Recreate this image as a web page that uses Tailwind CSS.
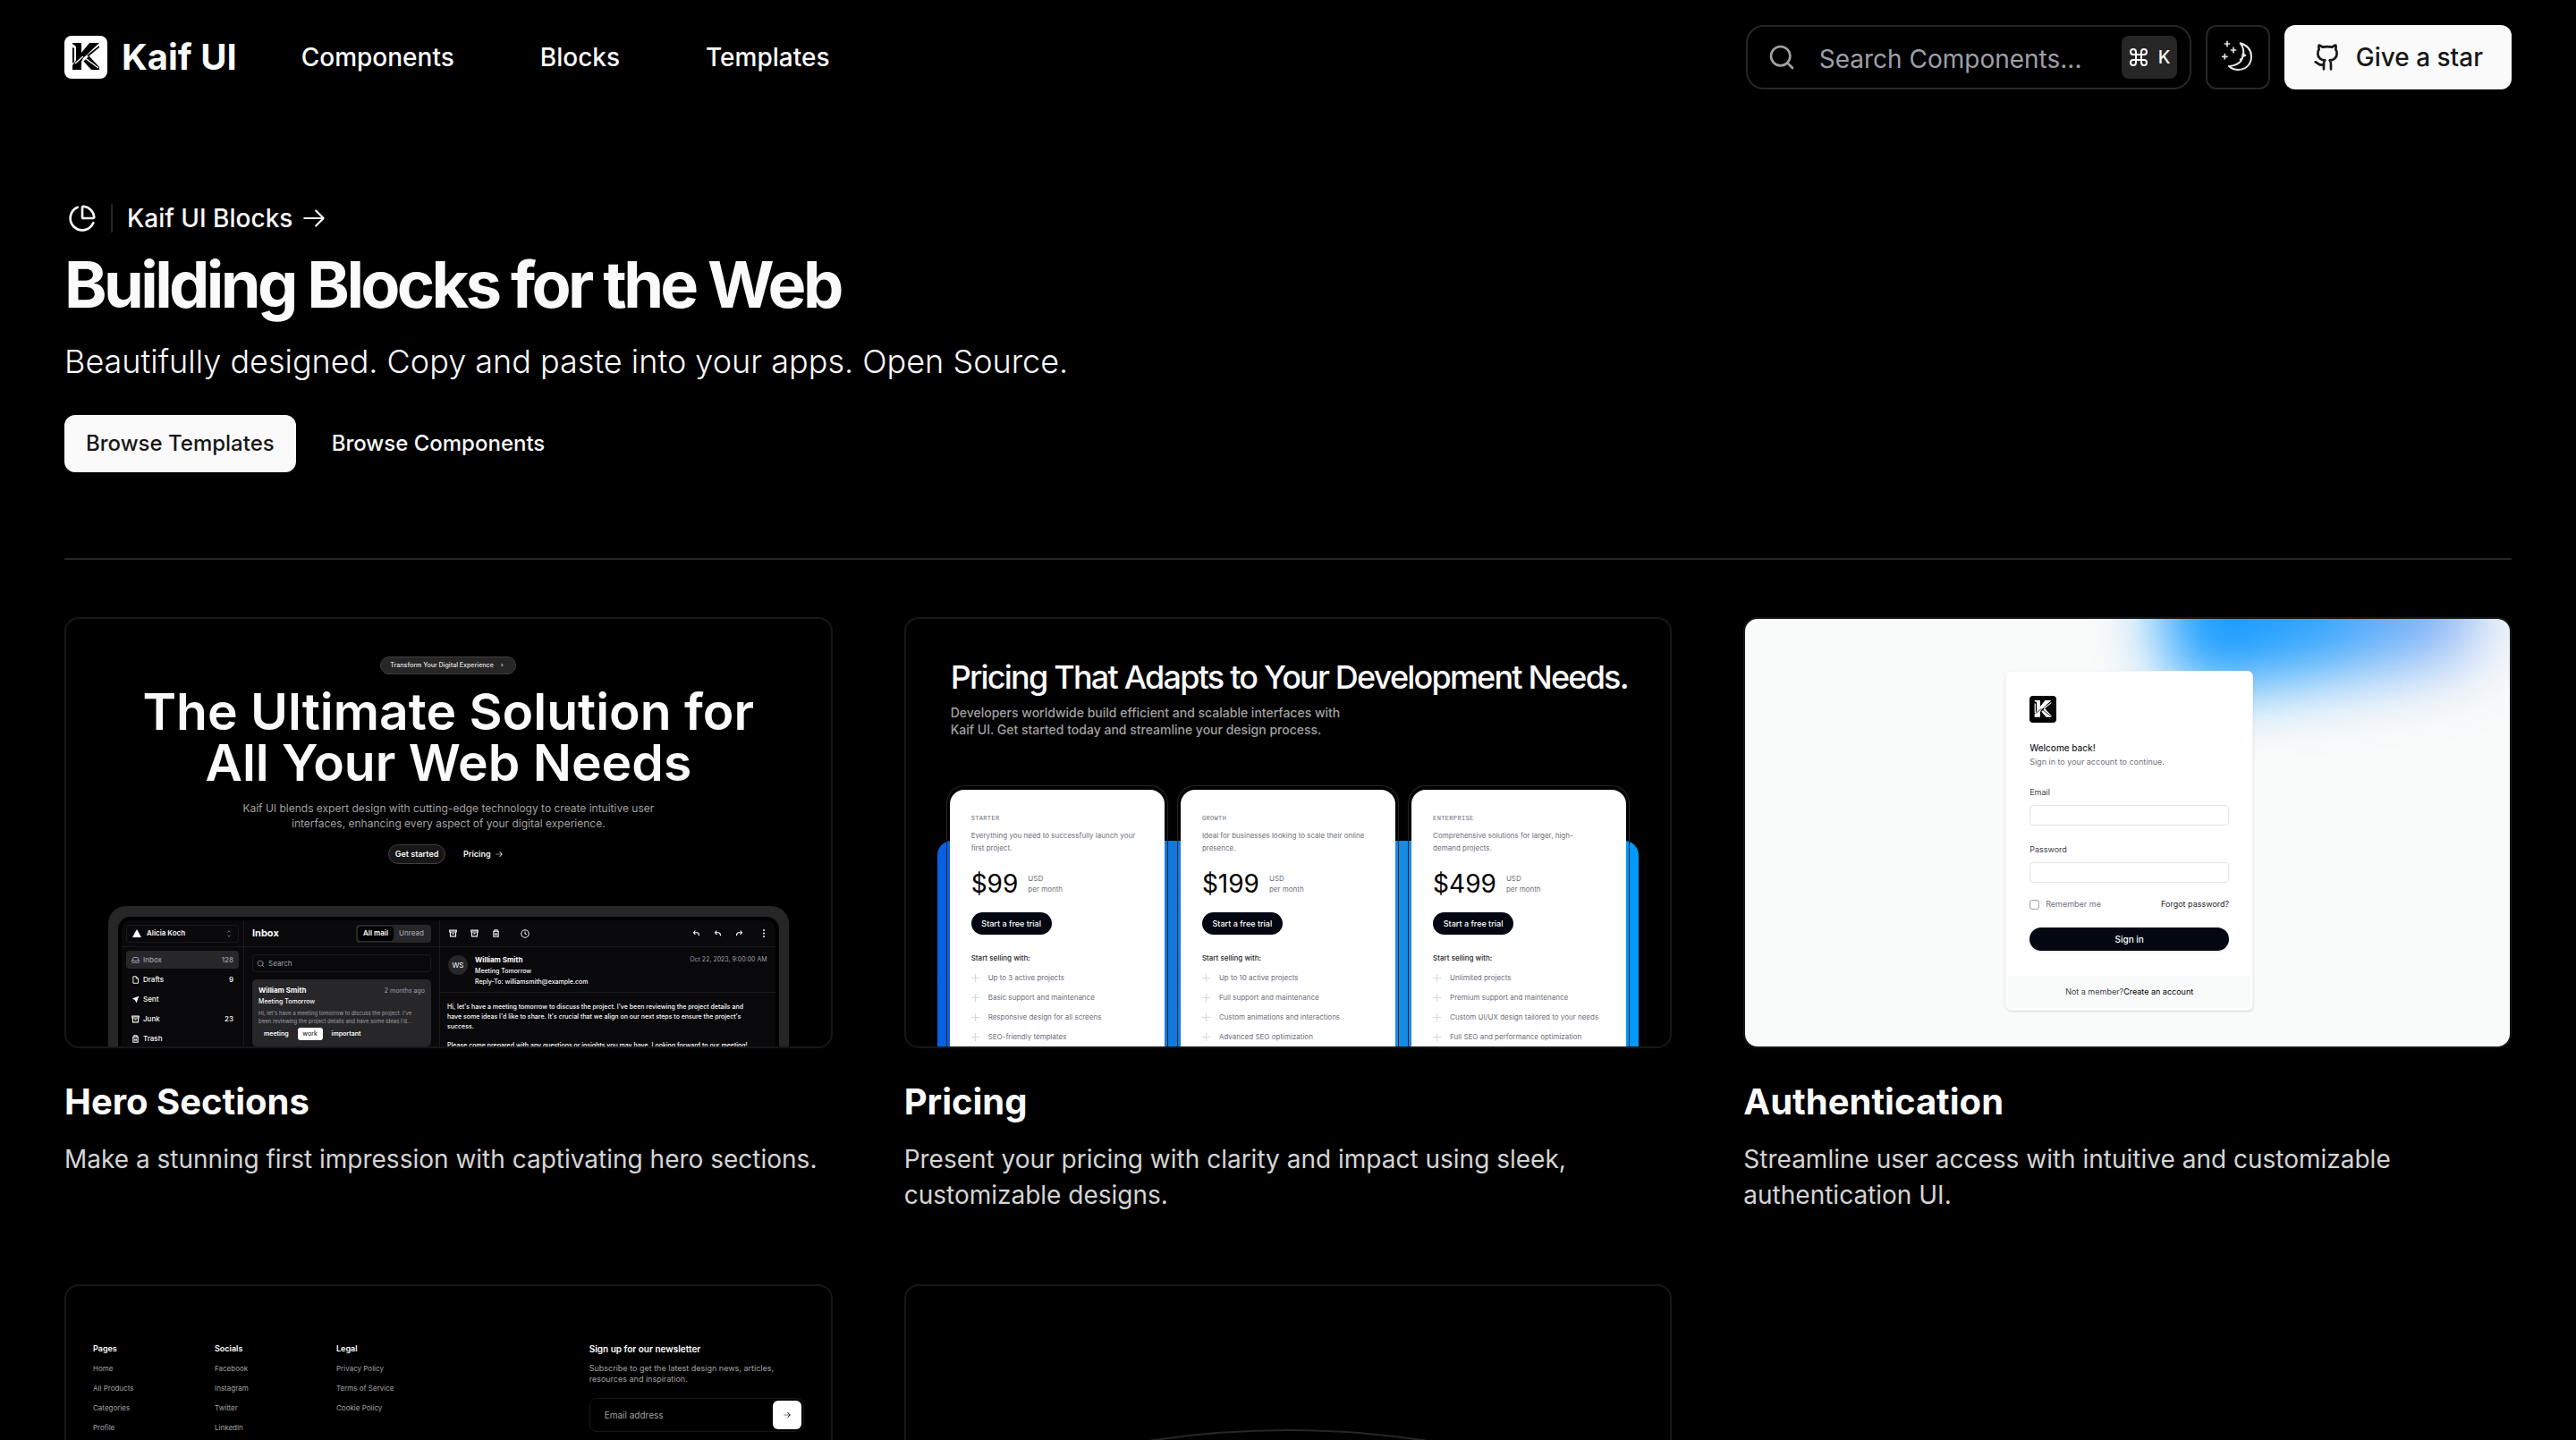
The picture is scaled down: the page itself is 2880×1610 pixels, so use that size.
<!DOCTYPE html>
<html lang="en">
<head>
<meta charset="utf-8">
<meta name="viewport" content="width=device-width, initial-scale=1">
<title>Kaif UI Blocks</title>
<script src="https://cdn.jsdelivr.net/npm/@tailwindcss/browser@4"></script>
</head>
<body class="h-screen overflow-x-hidden overflow-y-auto bg-black font-['Inter',sans-serif] text-neutral-50 [scrollbar-width:none]">

<svg class="hidden" aria-hidden="true">
  <symbol id="logo" viewBox="0 0 48 48">
    <path d="M9 8h10v12l-6 8V12l-4-3z"/>
    <path d="M9 13l2 1v15l-2 2z"/>
    <path d="M28 8h11l-18 17-2 4v9H9v-5l10-14z"/>
    <path d="M27 22l12 13v3h-9l-9-10z"/>
    <path d="M21 28L39 10.500M12 31l9-8M22 24l16 12" fill="none" stroke="var(--line)" stroke-width="1.300"/>
    <path d="M39 11v2L27 23l-2-1z"/>
  </symbol>
  <symbol id="arrow" viewBox="0 0 15 15"><path fill="currentColor" d="M8.14645 3.14645C8.34171 2.95118 8.65829 2.95118 8.85355 3.14645L12.8536 7.14645C13.0488 7.34171 13.0488 7.65829 12.8536 7.85355L8.85355 11.8536C8.65829 12.0488 8.34171 12.0488 8.14645 11.8536C7.95118 11.6583 7.95118 11.3417 8.14645 11.1464L11.2929 8H2.5C2.22386 8 2 7.77614 2 7.5C2 7.22386 2.22386 7 2.5 7H11.2929L8.14645 3.85355C7.95118 3.65829 7.95118 3.34171 8.14645 3.14645Z"/></symbol>
  <symbol id="search" viewBox="0 0 24 24"><g fill="none" stroke="currentColor" stroke-width="2" stroke-linecap="round"><circle cx="11" cy="11" r="8"/><path d="m21 21-4.300-4.300"/></g></symbol>
  <symbol id="inbox" viewBox="0 0 24 24"><g fill="none" stroke="currentColor" stroke-width="2.500" stroke-linejoin="round"><path d="M2 12h6l2 3h4l2-3h6v7H2z"/><path d="M2 12l4-8h12l4 8"/></g></symbol>
  <symbol id="file" viewBox="0 0 24 24"><path fill="none" stroke="currentColor" stroke-width="2.500" stroke-linejoin="round" d="M14 2H5v20h15V8zv6h6"/></symbol>
  <symbol id="send" viewBox="0 0 24 24"><path fill="currentColor" d="M22 2L2 9l8 4 5 9z"/></symbol>
  <symbol id="archive" viewBox="0 0 24 24"><g fill="none" stroke="currentColor" stroke-width="3"><path d="M2 3h20v5H2zM4 8v13h16V8M9 13h6"/></g></symbol>
  <symbol id="trash" viewBox="0 0 24 24"><g fill="none" stroke="currentColor" stroke-width="3"><path d="M3 6h18M5 6v16h14V6M8 6V2h8v4M10 11v7M14 11v7"/></g></symbol>
  <symbol id="clock" viewBox="0 0 24 24"><g fill="none" stroke="currentColor" stroke-width="2.500"><circle cx="12" cy="12" r="10"/><path d="M12 6v6l4 2"/></g></symbol>
  <symbol id="reply" viewBox="0 0 24 24"><path fill="none" stroke="currentColor" stroke-width="3" d="M9 16l-5-6 5-6M4 10h10q6 0 6 9"/></symbol>
  <symbol id="plus" viewBox="0 0 10 10"><path stroke="currentColor" d="M5 0v10M0 5h10"/></symbol>
</svg>

<header class="flex h-32 items-center px-[72px]">
  <a href="#" class="flex items-center gap-4 text-[40px] leading-none font-bold">
    <svg class="size-12 rounded-lg bg-white fill-black [--line:#fff]"><use href="#logo"/></svg>
    Kaif UI
  </a>
  <nav class="ml-[72px] flex gap-24 text-[28px] font-medium">
    <a href="#">Components</a><a href="#">Blocks</a><a href="#">Templates</a>
  </nav>
  <div class="ml-auto flex items-center gap-4">
    <label class="flex h-[72px] w-[498px] items-center rounded-[20px] border-2 border-neutral-800 pr-3.5 pl-[22px]">
      <svg class="size-8 shrink-0 text-neutral-400"><use href="#search"/></svg>
      <input type="text" aria-label="Search Components" placeholder="Search Components..." class="ml-[26px] w-0 grow bg-transparent pt-1 text-[28px] outline-none placeholder:text-zinc-400">
      <kbd class="flex h-12 w-[62px] items-center justify-center gap-2.5 rounded-lg bg-neutral-800 font-['Inter',sans-serif] text-xl font-medium">
        <svg class="size-6" viewBox="0 0 24 24" fill="none" stroke="currentColor" stroke-width="2"><path d="M15 6v12a3 3 0 1 0 3-3H6a3 3 0 1 0 3 3V6a3 3 0 1 0-3 3h12a3 3 0 1 0-3-3"/></svg>
        K</kbd>
    </label>
    <button aria-label="Toggle theme" class="flex size-[72px] items-center justify-center rounded-xl border-2 border-neutral-800">
      <svg class="size-9 overflow-visible" viewBox="372 78 108 108" fill="none" stroke="#e5e5e5" stroke-width="6" stroke-linejoin="round" stroke-linecap="round">
        <path d="M434 85C458 92 471 109 471 130C471 156 452 174 428 174C415 174 404 170 396 162C416 161 430 153 438 143L434 140L440 136C443 130 444 124 443 120L451 126L443 128C448 110 443 96 434 85Z"/>
        <path d="M441 118l11 9-9 4 1 7-8 4z" fill="#e5e5e5" stroke="none"/>
        <path d="M390 79v16M382 87h16M411 100v16M403 108h16M382 122v16M374 130h16" stroke-width="5"/>
      </svg>
    </button>
    <button class="flex h-[72px] items-center gap-4 rounded-xl bg-neutral-50 px-8 text-[28px] font-medium text-neutral-900">
      <svg class="size-8" viewBox="0 0 24 24" fill="none" stroke="currentColor" stroke-width="2" stroke-linecap="round" stroke-linejoin="round"><path d="M15 22v-4a4.800 4.800 0 0 0-1-3.500c3 0 6-2 6-5.500.080-1.250-.270-2.480-1-3.500.280-1.150.280-2.350 0-3.500 0 0-1 0-3 1.500-2.640-.500-5.360-.500-8 0C6 2 5 2 5 2c-.300 1.150-.300 2.350 0 3.500A5.403 5.403 0 0 0 4 9c0 3.500 3 5.500 6 5.500-.390.490-.680 1.050-.850 1.650-.170.600-.220 1.230-.150 1.850v4"/><path d="M9 18c-4.510 2-5-2-7-2"/></svg>
      Give a star
    </button>
  </div>
</header>

<main class="px-[72px] pt-[100px]">
  <section class="border-b-2 border-neutral-800 pb-24">
    <a href="#" class="flex h-8 items-center text-[28px] font-medium">
      <svg class="mx-1 size-8" viewBox="0 0 24 24" fill="none" stroke="currentColor" stroke-width="2" stroke-linecap="round" stroke-linejoin="round"><path d="M21 12c.552 0 1.005-.449.950-.998a10 10 0 0 0-8.953-8.951c-.550-.055-.998.398-.998.950v8a1 1 0 0 0 1 1z"/><path d="M21.210 15.890A10 10 0 1 1 8 2.830"/></svg>
      <span class="mx-3 h-8 w-0.5 bg-neutral-800"></span>
      <span class="ml-1">Kaif UI Blocks</span>
      <svg class="ml-2 size-8"><use href="#arrow"/></svg>
    </a>
    <h1 class="mt-4 text-[72px] leading-[84px] font-bold tracking-tighter">Building Blocks for the Web</h1>
    <p class="mt-4 text-4xl leading-[56px] font-light">Beautifully designed. Copy and paste into your apps. Open Source.</p>
    <div class="mt-8 flex gap-4 text-2xl font-medium">
      <button class="h-16 rounded-xl bg-neutral-50 px-6 text-neutral-900">Browse Templates</button>
      <button class="h-16 px-6">Browse Components</button>
    </div>
  </section>

  <section class="mt-16 grid grid-cols-3 gap-20">

    <article>
      <div class="h-[482px] overflow-hidden rounded-2xl border-2 border-neutral-900 text-center">
        <span class="mt-[42px] inline-flex h-5 w-[152px] items-center gap-2 rounded-full border border-neutral-700 bg-neutral-800 px-2.5 align-top text-[7px] font-semibold text-neutral-300">Transform Your Digital Experience <span>›</span></span>
        <h2 class="mt-[13px] text-[57px] leading-[57px] font-semibold">The Ultimate Solution for<br>All Your Web Needs</h2>
        <p class="mt-[14px] text-xs leading-[17px] text-neutral-400">Kaif UI blends expert design with cutting-edge technology to create intuitive user<br>interfaces, enhancing every aspect of your digital experience.</p>
        <div class="mt-[15px] flex items-center justify-center gap-5 pr-1.5 text-[9px] font-semibold">
          <button class="h-[22px] w-16 rounded-full border border-neutral-700 bg-neutral-900">Get started</button>
          <a href="#" class="flex items-center gap-1">Pricing <svg class="size-2.5"><use href="#arrow"/></svg></a>
        </div>
        <div class="mx-[47px] mt-[47px] rounded-t-[20px] bg-neutral-800 px-[11px] pt-3 text-left text-[8px] leading-[11px]">
          <div class="flex h-[150px] overflow-hidden rounded-t-[14px] border-x-4 border-t-4 border-black bg-[#09090b]">
            <div class="w-[137px] shrink-0 border-r border-zinc-800/60">
              <div class="flex h-[30px] items-center border-b border-zinc-800/60 px-[5px]">
                <div class="flex h-5 w-full items-center gap-1.5 rounded-sm border border-zinc-800/60 px-1.5 text-[8px] font-semibold">
                  <svg class="size-2.5" viewBox="0 0 10 10"><path fill="#fff" d="M5 0l5 9H0z"/></svg>Alicia Koch
                  <svg class="ml-auto size-2" viewBox="0 0 8 10" fill="none" stroke="#a1a1aa"><path d="M2 3l2-2 2 2M2 7l2 2 2-2"/></svg>
                </div>
              </div>
              <ul class="flex flex-col gap-0.5 px-[5px] pt-1 font-medium">
                <li class="flex h-5 items-center gap-1 rounded-sm bg-zinc-800 px-1.5 text-zinc-400"><svg class="size-[9px]"><use href="#inbox"/></svg>Inbox<span class="ml-auto">128</span></li>
                <li class="flex h-5 items-center gap-1 px-1.5"><svg class="size-[9px]"><use href="#file"/></svg>Drafts<span class="ml-auto">9</span></li>
                <li class="flex h-5 items-center gap-1 px-1.5"><svg class="size-[9px]"><use href="#send"/></svg>Sent</li>
                <li class="flex h-5 items-center gap-1 px-1.5"><svg class="size-[9px]"><use href="#archive"/></svg>Junk<span class="ml-auto">23</span></li>
                <li class="flex h-5 items-center gap-1 px-1.5"><svg class="size-[9px]"><use href="#trash"/></svg>Trash</li>
              </ul>
            </div>
            <div class="w-[219px] shrink-0 border-r border-zinc-800/60">
              <div class="flex h-[30px] items-center justify-between border-b border-zinc-800/60 px-[9px]">
                <b class="text-[11px]">Inbox</b>
                <div class="flex h-5 items-center rounded-sm bg-zinc-800 p-0.5 font-medium text-zinc-400">
                  <span class="flex h-full w-10 items-center justify-center rounded-sm bg-black font-semibold text-white">All mail</span>
                  <span class="w-10 text-center">Unread</span>
                </div>
              </div>
              <div class="mx-[9px] mt-2 flex h-5 items-center gap-1 rounded-sm border border-zinc-800/60 px-1 text-zinc-400"><svg class="size-[9px]"><use href="#search"/></svg>Search</div>
              <div class="mx-[9px] mt-2 h-[75px] rounded-[5px] bg-zinc-800 px-[7px] pt-[7px]">
                <div class="flex justify-between"><b>William Smith</b><span class="text-[7px] text-zinc-400">2 months ago</span></div>
                <div class="mt-px text-[7px] font-medium">Meeting Tomorrow</div>
                <p class="mt-[3px] text-[6px] leading-[9px] text-zinc-400">Hi, let's have a meeting tomorrow to discuss the project. I've<br>been reviewing the project details and have some ideas I'd...</p>
                <div class="mt-[3px] flex gap-2.5 pl-1.5 text-[7px] leading-[14px] font-semibold"><span>meeting</span><span class="w-7 rounded-[3px] bg-white text-center font-normal text-black">work</span><span>important</span></div>
              </div>
            </div>
            <div class="min-w-0 grow">
              <div class="flex h-[30px] items-center gap-[15px] border-b border-zinc-800/60 pr-2 pl-2.5">
                <svg class="size-[9px]"><use href="#archive"/></svg><svg class="size-[9px]"><use href="#archive"/></svg><svg class="size-[9px]"><use href="#trash"/></svg>
                <svg class="ml-2 size-[10px]"><use href="#clock"/></svg>
                <svg class="ml-auto size-[9px]"><use href="#reply"/></svg><svg class="size-[9px]"><use href="#reply"/></svg><svg class="size-[9px] -scale-x-100"><use href="#reply"/></svg>
                <svg class="ml-1 size-[9px]" viewBox="0 0 9 9" fill="currentColor"><circle cx="4" cy="1" r="1"/><circle cx="4" cy="4.500" r="1"/><circle cx="4" cy="8" r="1"/></svg>
              </div>
              <div class="flex h-[51px] border-b border-zinc-800/60 px-[9px] pt-2">
                <span class="mt-px flex size-[22px] items-center justify-center rounded-full bg-zinc-800">WS</span>
                <div class="ml-2 text-[7px] leading-[12px] font-medium"><b class="text-[8px]">William Smith</b><br>Meeting Tomorrow<br>Reply-To: williamsmith@example.com</div>
                <span class="ml-auto text-[7px] text-zinc-400">Oct 22, 2023, 9:00:00 AM</span>
              </div>
              <div class="px-2 pt-2.5 text-[7px] font-medium whitespace-nowrap">
                <p>Hi, let's have a meeting tomorrow to discuss the project. I've been reviewing the project details and<br>have some ideas I'd like to share. It's crucial that we align on our next steps to ensure the project's<br>success.</p>
                <p class="pt-2.5">Please come prepared with any questions or insights you may have. Looking forward to our meeting!</p>
              </div>
            </div>
          </div>
        </div>
      </div>
      <h3 class="mt-8 text-[40px] leading-[56px] font-bold">Hero Sections</h3>
      <p class="mt-4 text-[28px] leading-10 text-neutral-300">Make a stunning first impression with captivating hero sections.</p>
    </article>

    <article>
      <div class="flex h-[482px] flex-col overflow-hidden rounded-2xl border-2 border-neutral-900">
        <h2 class="mt-[41px] px-[50px] text-4xl leading-[48px] font-medium tracking-tighter whitespace-nowrap">Pricing That Adapts to Your Development Needs.</h2>
        <p class="mt-1.5 px-[50px] text-sm leading-[19px] font-medium text-neutral-400">Developers worldwide build efficient and scalable interfaces with<br>Kaif UI. Get started today and streamline your design process.</p>
        <div class="relative mt-[53px] px-[45px]">
          <div class="absolute inset-x-[35px] top-[62px] bottom-0 rounded-t-[16px] bg-linear-to-r from-[#0a5fe0] via-[#1a84da] to-[#0099ff]"></div>
          <div id="plans" class="relative grid grid-cols-3 gap-2.5"></div>
        </div>
      </div>
      <h3 class="mt-8 text-[40px] leading-[56px] font-bold">Pricing</h3>
      <p class="mt-4 text-[28px] leading-10 text-neutral-300">Present your pricing with clarity and impact using sleek, customizable designs.</p>
    </article>

    <article>
      <div class="relative flex h-[482px] justify-center overflow-hidden rounded-2xl border-2 border-neutral-900 bg-[#f9fafa] pl-1 text-[9px] leading-3 text-zinc-700">
        <div class="absolute -top-24 right-9 h-[160px] w-[350px] -rotate-6 rounded-[40px] bg-linear-to-r from-[#0096ff] via-[#2ea4fd] to-[#9ab8f4] blur-[36px]"></div>
        <form class="relative mt-[58px] flex h-[380px] w-[277px] flex-col rounded-md border border-zinc-100 bg-white shadow-sm">
          <div class="flex grow flex-col px-[26px] pt-[27px]">
            <svg class="size-[30px] rounded bg-black fill-white [--line:#000]"><use href="#logo"/></svg>
            <b class="mt-[22px] text-[10px] font-medium text-zinc-800">Welcome back!</b>
            <span class="mt-1 text-zinc-500">Sign in to your account to continue.</span>
            <label for="email" class="mt-[22px]">Email</label>
            <input id="email" type="email" class="mt-2 h-[23px] rounded border border-zinc-200 px-2 outline-none">
            <label for="password" class="mt-[21px]">Password</label>
            <input id="password" type="password" class="mt-2 h-[23px] rounded border border-zinc-200 px-2 outline-none">
            <div class="mt-[18px] flex items-center justify-between">
              <label class="flex items-center gap-[7px] text-zinc-500"><input type="checkbox" class="size-[11px] appearance-none rounded-[3px] border border-zinc-400">Remember me</label>
              <a href="#" class="text-zinc-800">Forgot password?</a>
            </div>
            <button type="button" class="mt-5 h-[26px] rounded-full bg-[#030712] text-[10px] font-medium text-white shadow">Sign in</button>
          </div>
          <div class="m-0.5 flex h-9 items-center justify-center bg-[#f9fafa]">Not a member?<a href="#" class="text-black">Create an account</a></div>
        </form>
      </div>
      <h3 class="mt-8 text-[40px] leading-[56px] font-bold">Authentication</h3>
      <p class="mt-4 text-[28px] leading-10 text-neutral-300">Streamline user access with intuitive and customizable authentication UI.</p>
    </article>

    <article class="flex h-[482px] rounded-2xl border-2 border-neutral-900 px-[30px] pt-[59px] text-[8px] leading-[22px] text-neutral-400">
      <ul class="w-[136px]"><li class="text-[9px] font-semibold text-white">Pages</li><li>Home</li><li>All Products</li><li>Categories</li><li>Profile</li></ul>
      <ul class="w-[136px]"><li class="text-[9px] font-semibold text-white">Socials</li><li>Facebook</li><li>Instagram</li><li>Twitter</li><li>LinkedIn</li></ul>
      <ul><li class="text-[9px] font-semibold text-white">Legal</li><li>Privacy Policy</li><li>Terms of Service</li><li>Cookie Policy</li></ul>
      <div class="ml-auto w-60">
        <b class="block text-[10px] font-semibold text-white">Sign up for our newsletter</b>
        <p class="mt-[5px] text-[9px] leading-3">Subscribe to get the latest design news, articles,<br>resources and inspiration.</p>
        <div class="mt-[15px] flex h-[38px] items-center rounded-lg border border-neutral-900 pr-0.5 pl-4">
          <input type="email" aria-label="Email address" placeholder="Email address" class="w-0 grow bg-transparent text-[10px] outline-none placeholder:text-neutral-400">
          <button aria-label="Subscribe" class="flex size-8 items-center justify-center rounded-md bg-white text-black"><svg class="size-2.5"><use href="#arrow"/></svg></button>
        </div>
      </div>
    </article>

    <article class="h-[482px] overflow-hidden rounded-2xl border-2 border-neutral-900 pt-40">
      <svg class="h-[320px] w-full" viewBox="0 0 854 320" fill="none" stroke="#262626" stroke-width="2"><ellipse cx="427" cy="155" rx="400" ry="154"/></svg>
    </article>
  </section>
</main>

<script>
  const plans = [
    ["STARTER", "Everything you need to successfully launch your<br>first project.", "$99", ["Up to 3 active projects", "Basic support and maintenance", "Responsive design for all screens", "SEO-friendly templates"]],
    ["GROWTH", "Ideal for businesses looking to scale their online<br>presence.", "$199", ["Up to 10 active projects", "Full support and maintenance", "Custom animations and interactions", "Advanced SEO optimization"]],
    ["ENTERPRISE", "Comprehensive solutions for larger, high-<br>demand projects.", "$499", ["Unlimited projects", "Premium support and maintenance", "Custom UI/UX design tailored to your needs", "Full SEO and performance optimization"]],
  ];
  document.getElementById("plans").innerHTML = plans.map(([name, text, price, items]) => `
    <div class="rounded-t-[20px] border border-b-0 border-neutral-800 px-[3px] pt-1">
      <div class="h-[300px] rounded-t-2xl bg-white px-6 pt-[26px] text-[8px] leading-3 text-zinc-500">
        <div class="font-['Liberation_Mono',monospace] text-[7px] tracking-wider">${name}</div>
        <p class="mt-1.5 leading-[14px] whitespace-nowrap">${text}</p>
        <div class="mt-[18px] flex items-center gap-[11px]"><span class="text-[28px] leading-[30px] text-black">${price}</span><span>USD<br>per month</span></div>
        <button class="mt-[17px] h-[25px] w-[90px] rounded-full bg-[#030712] text-[9px] font-medium text-white">Start a free trial</button>
        <div class="mt-5 font-medium text-zinc-800">Start selling with:</div>
        <ul class="mt-[5px] leading-[22px]">${items.map(i => `<li class="flex items-center gap-2.5 whitespace-nowrap"><svg class="size-[9px] text-zinc-300"><use href="#plus"/></svg>${i}</li>`).join("")}</ul>
      </div>
    </div>`).join("");
</script>
</body>
</html>
